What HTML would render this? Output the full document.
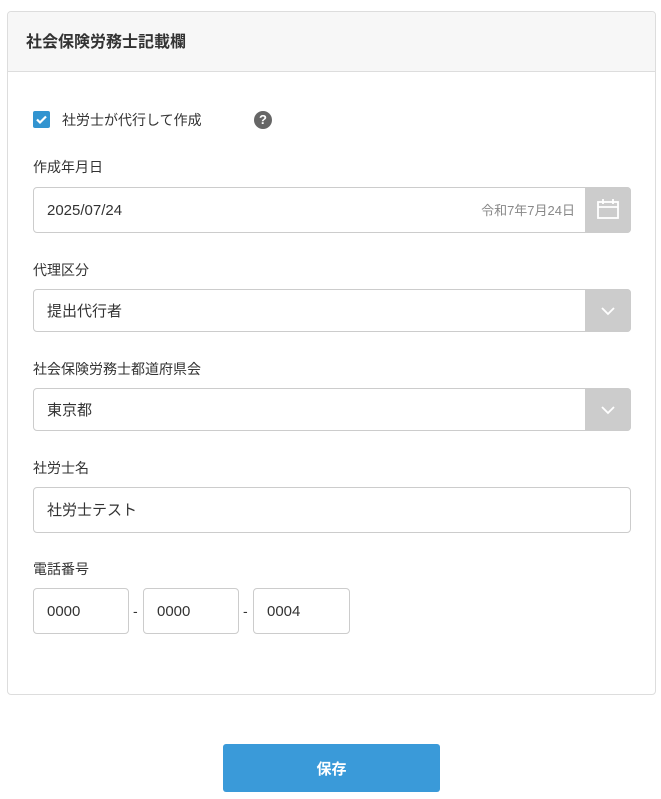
<!DOCTYPE html>
<html><head><meta charset="utf-8"><style>
body{margin:0;width:661px;height:799px;background:#fff;font-family:"Liberation Sans","Noto Sans CJK JP",sans-serif;color:#333;position:relative}
.card{position:absolute;left:7px;top:11px;width:647px;height:682px;border:1px solid #ddd;border-radius:4px}
.hd{height:59px;background:#f7f7f7;border-bottom:1px solid #ddd;border-radius:4px 4px 0 0;font-weight:bold;font-size:16px;line-height:62px;padding-left:18px;color:#333}
.a{position:absolute}
.lbl{font-size:14px;color:#333}
.inp{position:absolute;left:33px;width:598px;border:1px solid #ccc;border-radius:4px;font-size:15px;box-sizing:border-box;padding-left:13px;background:#fff}
.btn{position:absolute;right:-1px;top:-1px;width:46px;background:#ccc;border-radius:0 4px 4px 0}
</style></head><body>
<div class="card"><div class="hd">社会保険労務士記載欄</div></div>
<div class="a" style="left:33px;top:111px;width:17px;height:17px;background:#3294d0;border-radius:2px">
<svg width="17" height="17"><path d="M4 8.5l3 3 6-6" stroke="#fff" stroke-width="2.2" fill="none"/></svg></div>
<div class="a lbl" style="left:62px;top:110px">社労士が代行して作成</div>
<div class="a" style="left:254px;top:111px;width:18px;height:18px;border-radius:50%;background:#666;color:#fff;font-size:13px;font-weight:bold;text-align:center;line-height:18px">?</div>
<div class="a lbl" style="left:33px;top:157px">作成年月日</div>
<div class="inp" style="top:187px;height:46px;line-height:46px">2025/07/24
<span class="a" style="right:55px;top:0;font-size:13px;color:#888">令和7年7月24日</span>
<div class="btn" style="height:46px"><svg width="46" height="46"><rect x="13" y="15" width="20" height="16" fill="none" stroke="#fff" stroke-width="1.8"/><path d="M13 20h20M18 12v5M28 12v5" stroke="#fff" stroke-width="1.8"/></svg></div></div>
<div class="a lbl" style="left:33px;top:260px">代理区分</div>
<div class="inp" style="top:289px;height:43px;line-height:43px">提出代行者
<div class="btn" style="height:43px"><svg width="46" height="43"><path d="M17 19l6 6 6-6" stroke="#fff" stroke-width="1.8" fill="none"/></svg></div></div>
<div class="a lbl" style="left:33px;top:359px">社会保険労務士都道府県会</div>
<div class="inp" style="top:388px;height:43px;line-height:43px">東京都
<div class="btn" style="height:43px"><svg width="46" height="43"><path d="M17 19l6 6 6-6" stroke="#fff" stroke-width="1.8" fill="none"/></svg></div></div>
<div class="a lbl" style="left:33px;top:458px">社労士名</div>
<div class="inp" style="top:487px;height:46px;line-height:46px">社労士テスト</div>
<div class="a lbl" style="left:33px;top:559px">電話番号</div>
<div class="inp" style="top:588px;height:46px;line-height:46px;width:96px">0000</div>
<div class="a" style="left:133px;top:603px;font-size:14px">-</div>
<div class="inp" style="left:143px;top:588px;height:46px;line-height:46px;width:96px">0000</div>
<div class="a" style="left:243px;top:603px;font-size:14px">-</div>
<div class="inp" style="left:253px;top:588px;height:46px;line-height:46px;width:97px">0004</div>
<div class="a" style="left:223px;top:744px;width:217px;height:48px;background:#3a9ad9;border-radius:3px;color:#fff;font-weight:bold;font-size:15px;text-align:center;line-height:52px">保存</div>
</body></html>
